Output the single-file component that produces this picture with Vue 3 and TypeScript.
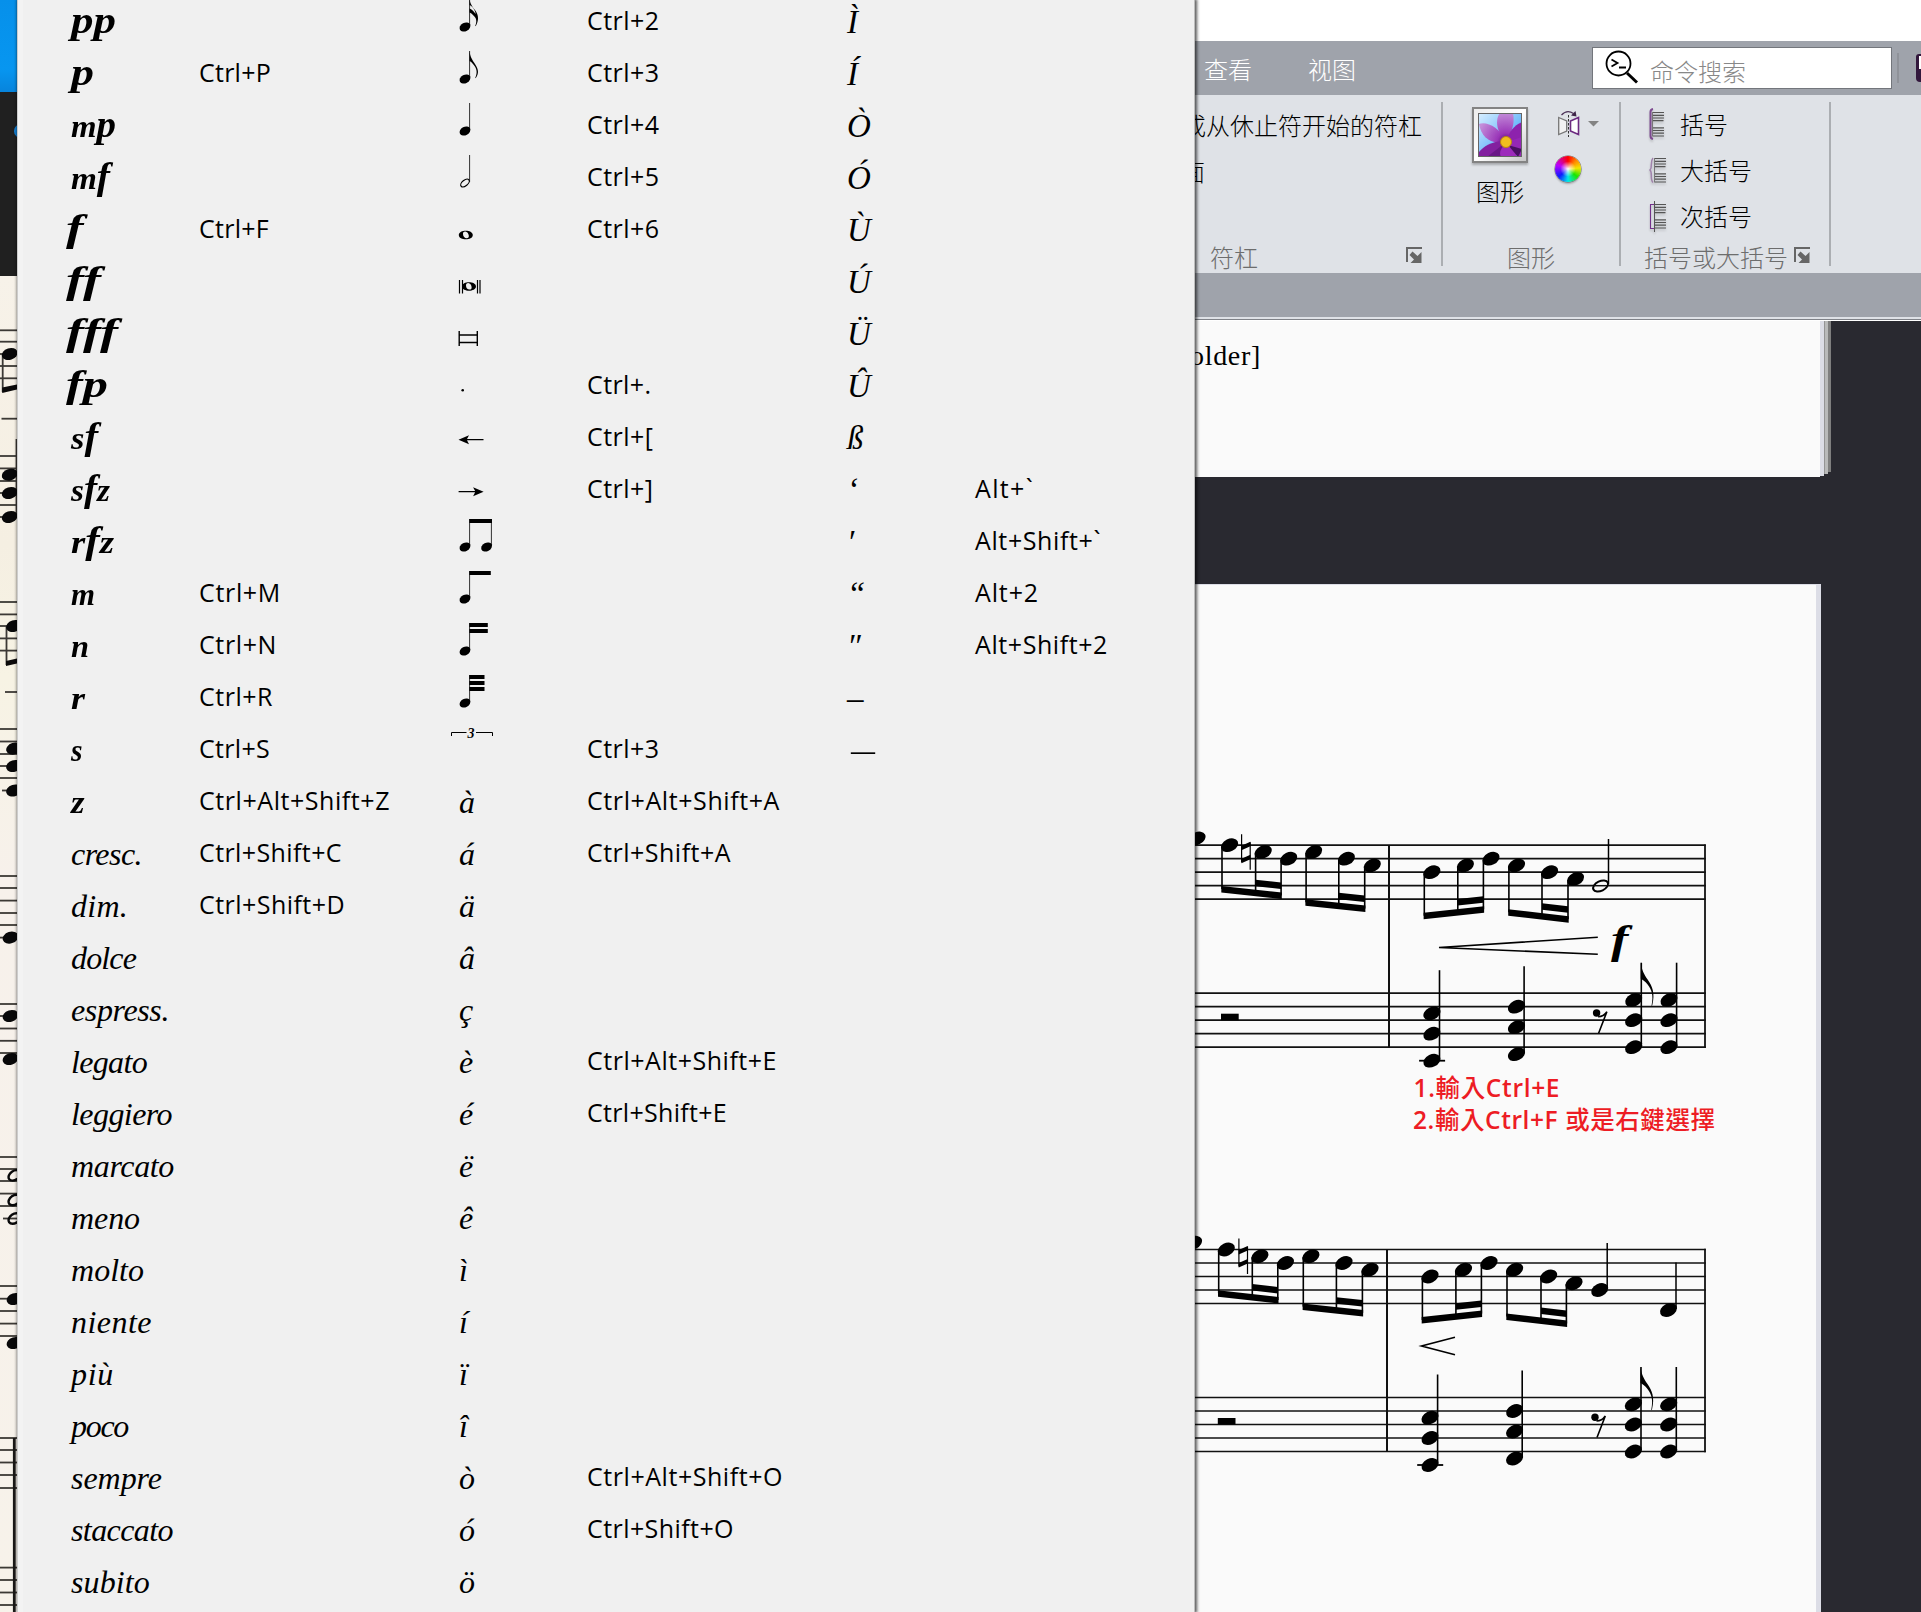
<script setup lang="ts">
interface Item {
  word?: string
  dyn?: string
  icon?: string
  w?: number
  keys?: string
  kw?: number
  indent?: number
}

// Spreads a label over the given width by adjusting its tracking
const vFit = {
  mounted(el: HTMLElement, binding: { value?: number }) {
    if (!binding.value) return
    const n = (el.textContent ?? '').length
    const now = el.getBoundingClientRect().width
    if (n) el.style.letterSpacing = `${((binding.value - now) / n).toFixed(3)}px`
  },
}

// Widens the letter shapes themselves, as dynamics are drawn broad
const vWiden = {
  mounted(el: HTMLElement, binding: { value?: number }) {
    if (!binding.value) return
    const now = el.getBoundingClientRect().width
    el.style.transform = `scaleX(${(binding.value / now).toFixed(4)})`
  },
}

const expression: Item[] = [
  { dyn: 'pp', w: 45 },
  { dyn: 'p', w: 23, keys: 'Ctrl+P', kw: 72 },
  { dyn: 'mp', w: 45 },
  { dyn: 'mf', w: 39 },
  { dyn: 'f', w: 17.5, keys: 'Ctrl+F', kw: 70 },
  { dyn: 'ff', w: 35 },
  { dyn: 'fff', w: 52 },
  { dyn: 'fp', w: 42 },
  { dyn: 'sf', w: 27 },
  { dyn: 'sfz', w: 39 },
  { dyn: 'rfz', w: 43 },
  { dyn: 'm', w: 24, keys: 'Ctrl+M', kw: 82 },
  { dyn: 'n', w: 18, keys: 'Ctrl+N', kw: 78 },
  { dyn: 'r', w: 14, keys: 'Ctrl+R', kw: 74 },
  { dyn: 's', w: 11.5, keys: 'Ctrl+S', kw: 71 },
  { dyn: 'z', w: 13.5, keys: 'Ctrl+Alt+Shift+Z', kw: 191 },
  { word: 'cresc.', w: 71, keys: 'Ctrl+Shift+C', kw: 143 },
  { word: 'dim.', w: 57, keys: 'Ctrl+Shift+D', kw: 146 },
  { word: 'dolce', w: 65 },
  { word: 'espress.', w: 98 },
  { word: 'legato', w: 76 },
  { word: 'leggiero', w: 101 },
  { word: 'marcato', w: 103 },
  { word: 'meno', w: 69 },
  { word: 'molto', w: 73 },
  { word: 'niente', w: 81 },
  { word: 'più', w: 43 },
  { word: 'poco', w: 57 },
  { word: 'sempre', w: 91 },
  { word: 'staccato', w: 102 },
  { word: 'subito', w: 79 },
]

const notes: Item[] = [
  { icon: 'n16', keys: 'Ctrl+2', kw: 72.5 },
  { icon: 'n8', keys: 'Ctrl+3', kw: 72.5 },
  { icon: 'n4', keys: 'Ctrl+4', kw: 72.5 },
  { icon: 'n2', keys: 'Ctrl+5', kw: 72.5 },
  { icon: 'n1', keys: 'Ctrl+6', kw: 72.5 },
  { icon: 'breve' },
  { icon: 'longa' },
  { icon: 'dot', keys: 'Ctrl+.', kw: 64.5 },
  { icon: 'left', keys: 'Ctrl+[', kw: 66.5 },
  { icon: 'right', keys: 'Ctrl+]', kw: 66.5 },
  { icon: 'beam2' },
  { icon: 'b1' },
  { icon: 'b2' },
  { icon: 'b3' },
  { icon: 'tuplet', keys: 'Ctrl+3', kw: 72.5 },
  { word: 'à', keys: 'Ctrl+Alt+Shift+A', kw: 193 },
  { word: 'á', keys: 'Ctrl+Shift+A', kw: 144 },
  { word: 'ä' },
  { word: 'â' },
  { word: 'ç' },
  { word: 'è', keys: 'Ctrl+Alt+Shift+E', kw: 190 },
  { word: 'é', keys: 'Ctrl+Shift+E', kw: 140 },
  { word: 'ë' },
  { word: 'ê' },
  { word: 'ì' },
  { word: 'í' },
  { word: 'ï' },
  { word: 'î' },
  { word: 'ò', keys: 'Ctrl+Alt+Shift+O', kw: 196 },
  { word: 'ó', keys: 'Ctrl+Shift+O', kw: 147 },
  { word: 'ö' },
]

const letters: Item[] = [
  { word: 'Ì' },
  { word: 'Í' },
  { word: 'Ò' },
  { word: 'Ó' },
  { word: 'Ù' },
  { word: 'Ú' },
  { word: 'Ü' },
  { word: 'Û' },
  { word: 'ß' },
  { word: '‘', keys: 'Alt+`', kw: 59 },
  { word: '′', keys: 'Alt+Shift+`', kw: 126 },
  { word: '“', keys: 'Alt+2', kw: 64 },
  { word: '″', keys: 'Alt+Shift+2', kw: 133 },
  { word: '–' },
  { word: '—', indent: 4 },
]

const columns = [expression, notes, letters]
const isLarge = (c: string) => c === 'f' || c === 'p'

// Score
const LINES = [0, 1, 2, 3, 4]
const SP = 13.5

interface Beam { xs: number[]; l: number; r: number }
interface Chord { x: number; ys: number[]; top: number; flag?: boolean; ledger?: boolean }
interface System {
  treble: number
  bass: number
  bar: number
  heads: [number, number][]
  beams: Beam[]
  naturalX: number
  hairpin: [number, number, number, number, number]
  restX: number
  rest8X: number
  chords: Chord[]
}

const steps = [-1, 0, 1, 2, 1, 2, 3, 4, 3, 2, 3, 4, 5]
const xs1 = [1197, 1229.6, 1263.2, 1288.7, 1313.7, 1346.4, 1372.3, 1431.9, 1465.4, 1491, 1516.5, 1549.6, 1575.6]
const xs2 = [1193.5, 1226.3, 1259.9, 1285.4, 1310.9, 1344, 1370, 1430, 1463.5, 1489, 1514.6, 1548.6, 1574]

function makeSystem(
  xs: number[], dy: number, bar: number, cx: number[],
  hairpin: System['hairpin'], naturalX: number, restX: number, rest8X: number,
): System {
  const t = 845.2 + dy
  const b = 993.2 + dy
  const heads = xs.map((x, i) => [x, t + steps[i] * 6.75] as [number, number])
  const tops: [number, number][] = [[886, 892.6], [899.3, 905.6], [912.7, 906.3], [909.3, 916.2]]
  const beams = tops.map(([l, r], g) => ({
    xs: [0, 1, 2].map((k) => xs[1 + g * 3 + k] - 7.6),
    l: l + dy,
    r: r + dy,
  }))
  const chords: Chord[] = [
    { x: cx[0], ys: [20.2, 40.5, 67.5].map((v) => b + v), top: b - 23, ledger: true },
    { x: cx[1], ys: [13.5, 34, 61].map((v) => b + v), top: b - 27 },
    { x: cx[2], ys: [6.8, 27, 54].map((v) => b + v), top: b - 30.5, flag: true },
    { x: cx[3], ys: [6.8, 27, 54].map((v) => b + v), top: b - 30.5 },
  ]
  return { treble: t, bass: b, bar, heads, beams, naturalX, hairpin, restX, rest8X, chords }
}

const systems: System[] = [
  makeSystem(xs1, 0, 1389, [1431.9, 1516.5, 1633.7, 1669], [1439, 947.5, 1597.8, 937.3, 954.3], 1241.4, 1221, 1592.6),
  makeSystem(xs2, 404.3, 1387, [1430, 1514.6, 1633.4, 1668.7], [1421.5, 1346, 1455, 1337.3, 1354.7], 1238.7, 1217.8, 1591),
]

const headTf = (x: number, y: number) => `translate(${x} ${y}) rotate(-26)`

function beamPoints(b: Beam) {
  const [a, , c] = b.xs
  return `${a - 0.7},${b.l} ${c + 0.7},${b.r} ${c + 0.7},${b.r + 6.5} ${a - 0.7},${b.l + 6.5}`
}
function beamAt(b: Beam, x: number) {
  const [a, , c] = b.xs
  return b.l + ((b.r - b.l) * (x - a)) / (c - a)
}
function subPoints(b: Beam) {
  const [, m, c] = b.xs
  const y1 = beamAt(b, m) - 10
  const y2 = b.r - 10
  return `${m},${y1} ${c},${y2} ${c},${y2 + 6.5} ${m},${y1 + 6.5}`
}

// Scanned sheet at the far left
const sheetLines = [
  330.3, 341.7, 354, 366, 378.3, 456, 468.4, 481, 505, 602, 614.4, 626, 638.4, 650.6,
  729, 741.5, 754, 778, 876, 888, 900.6, 913, 925, 1004, 1016, 1028.5, 1040.8, 1053,
  1157, 1169, 1181, 1193.6, 1206, 1286, 1298.7, 1311, 1323.6, 1336,
  1438, 1450, 1462.5, 1475, 1488, 1567.6, 1580, 1592.5, 1605,
]
const sheetHeads = [
  [9.7, 354], [9.7, 474.7], [9.7, 493], [9.7, 517], [14, 626], [14, 748.6], [14, 766], [14, 790.5],
  [10.5, 937.6], [10.5, 1016], [10.5, 1059], [14.5, 1299], [14.5, 1343],
]
const sheetOpen = [[14.5, 1175.4], [14.5, 1200], [14.5, 1218.5]]
const brackets = ['括号', '大括号', '次括号']
const flagPath = 'c1.2 8 3 11 7 17 c4.5 6.500 7.500 13 4.500 25.500 c-.4 1 -1 .8 -.7 0 c2 -10 .2 -15 -3.800 -20.500 c-2.500 -3.200 -4.800 -5 -7 -6z'
</script>

<template>
  <div class="screen">
    <aside class="behind">
      <div class="sky"></div>
      <div class="panel"><i class="bubble"></i></div>
      <svg class="sheet" viewBox="0 276 17 1336" width="17" height="1336">
        <g stroke="#3c3935" stroke-width="1.800">
          <line v-for="y in sheetLines" :key="y" x1="0" x2="17" :y1="y" :y2="y" />
          <line x1="0" x2="6" y1="493" y2="493" />
          <line x1="0" x2="6" y1="517" y2="517" />
          <line x1="0" x2="8" y1="766" y2="766" />
          <line x1="2" x2="8" y1="790.5" y2="790.5" />
          <line x1="0" x2="6" y1="937.6" y2="937.6" />
          <line x1="3" x2="17" y1="1218.5" y2="1218.5" />
          <line x1="1.5" x2="17" y1="418.7" y2="418.7" />
          <line x1="5" x2="17" y1="692" y2="692" />
          <line x1="2.700" x2="2.700" y1="354" y2="392" />
          <line x1="6.500" x2="6.500" y1="626" y2="665" />
          <line x1="16.500" x2="16.500" y1="439" y2="517" />
        </g>
        <path d="M2.200 387.500 17 384.500V389.500L2.200 393zM6 661 17 658.500V663.500L6 666z" fill="#0b0a0a" />
        <line x1="14.300" x2="14.300" y1="1438" y2="1612" stroke="#1a1817" stroke-width="2.800" />
        <ellipse v-for="(h, i) in sheetHeads" :key="i" rx="8" ry="5.800" :transform="`translate(${h[0]} ${h[1]}) rotate(-18)`" fill="#080809" />
        <ellipse v-for="(h, i) in sheetOpen" :key="'o' + i" rx="6.500" ry="4.500" :transform="`translate(${h[0]} ${h[1]}) rotate(-35)`" fill="none" stroke="#080809" stroke-width="2.400" />
      </svg>
    </aside>

    <div class="menu">
      <ul v-for="(col, c) in columns" :key="c" class="col">
        <li v-for="(it, r) in col" :key="r" class="row">
          <span class="glyph">
            <span v-if="it.dyn" v-widen="it.w" class="dyn" :class="{ hang: it.dyn[0] === 'f' }"><span v-for="(ch, k) in it.dyn" :key="k" :class="isLarge(ch) ? 'lg' : 'sm'">{{ ch }}</span></span>
            <span v-else-if="it.word" v-fit="it.w" class="word" :class="{ wide: it.indent, cap: c === 2 }">{{ it.word }}</span>
            <svg v-else class="note" viewBox="0 0 50 44" width="50" height="44">
              <template v-if="['n16', 'n8', 'n4', 'beam2', 'b1', 'b2', 'b3'].includes(it.icon!)">
                <ellipse rx="5.700" ry="4.200" transform="translate(15 27) rotate(-28)" />
                <line x1="19.600" x2="19.600" y1="-1" y2="26" stroke="#000" stroke-width=".8" />
              </template>
              <path v-if="it.icon === 'n8'" d="M19.500 -1c.6 6 3 9 5.500 13c3.500 5.500 4.200 9 .8 14c-.8 .4 -.8 0 -.4 -.6c2.400 -5.500 1 -9 -1.600 -12.400c-1.800 -2.400 -3 -3.600 -4.300 -4z" />
              <path v-if="it.icon === 'n16'" d="M19.500 -1c.6 5 3 8 5.500 11c3.500 4.500 4.200 10 .8 16c-.8 .4 -.8 0 -.4 -.6c1.500 -4 1 -7 -1 -9c-2 -2.400 -3.500 -3.600 -4.900 -4v-4c2 .6 4.500 3 6.200 5.500c-.8 -4.500 -3.600 -8 -6.200 -9z" />
              <g v-if="it.icon === 'n2'" fill="none" stroke="#000">
                <ellipse rx="5" ry="2.800" transform="translate(15 27) rotate(-38)" stroke-width="1.200" />
                <line x1="19.600" x2="19.600" y1="-1" y2="26" stroke-width=".8" />
              </g>
              <path v-if="it.icon === 'n1'" fill-rule="evenodd" d="M8.800 27c0 -5.800 14 -5.800 14 0s-14 5.800 -14 0zM13 26c0 2.500 1.800 4.300 3.600 4.300s2.400 -1 2.200 -2.700s-1.600 -4 -3.500 -4s-2.300 1.100 -2.300 2.400z" />
              <g v-if="it.icon === 'breve'">
                <path fill-rule="evenodd" d="M12 26.500c0 -5.600 14 -5.600 14 0s-14 5.600 -14 0zM16 25.500c0 2.500 1.600 4.100 3.400 4.100s2.400 -1 2.200 -2.600s-1.500 -3.900 -3.300 -3.900s-2.300 1.100 -2.300 2.400z" />
                <path d="M9.500 20v13.500M12.500 20v13.500M27.500 20v13.500M30 20v13.500" stroke="#000" stroke-width="1.200" />
              </g>
              <path v-if="it.icon === 'longa'" d="M9.200 19v15M27.300 19v15M9 23h18.500M9 30.500h18.500" stroke="#000" stroke-width="1.400" />
              <circle v-if="it.icon === 'dot'" cx="12.700" cy="26.300" r="1.300" />
              <path v-if="it.icon === 'left'" d="M8.500 23.700l10.500 -4.500l-2 3.900h16.500v1.200h-16.500l2 3.900z" />
              <path v-if="it.icon === 'right'" d="M33.600 23.700l-10.500 -4.500l2 3.900h-16.500v1.200h16.500l-2 3.900z" />
              <g v-if="it.icon === 'beam2'">
                <rect x="19.300" y="-1" width="22.700" height="4" />
                <ellipse rx="5.700" ry="4.200" transform="translate(36.600 27) rotate(-28)" />
                <line x1="41.400" x2="41.400" y1="-1" y2="26" stroke="#000" stroke-width=".8" />
              </g>
              <rect v-if="it.icon === 'b1'" x="19.300" y="-1" width="21.500" height="4" />
              <path v-if="it.icon === 'b2'" d="M19.300 -1h18.500v4h-18.500zM19.300 5h18.500v4h-18.500z" />
              <path v-if="it.icon === 'b3'" d="M19.300 -1h15.200v4h-15.200zM19.300 5h15.200v4h-15.200zM19.300 11h15.200v4h-15.200z" />
              <g v-if="it.icon === 'tuplet'">
                <path d="M1.500 8v-3.500h15M26 4.500h16.500v3.500" fill="none" stroke="#000" stroke-width="1" />
                <text x="21" y="10" text-anchor="middle" class="three">3</text>
              </g>
            </svg>
          </span>
          <span v-if="it.keys" v-fit="it.kw" class="keys">{{ it.keys }}</span>
        </li>
      </ul>
    </div>

    <main class="app">
      <div class="titlebar"></div>
      <nav class="tabs">
        <span>查看</span>
        <span>视图</span>
        <div class="search">
          <svg width="36" height="36" viewBox="1604 48 36 36" fill="none" stroke="#000">
            <circle cx="1618.500" cy="63.500" r="12" stroke-width="1.800" />
            <path d="M1627 73l10 9.500" stroke-width="3" />
            <path d="M1611.500 59.500l6 3.500l-6 3.500M1619 67.500h7" stroke-width="1.800" />
          </svg>
          <em>命令搜索</em>
        </div>
        <i class="tick"></i>
        <i class="badge"><b></b></i>
      </nav>

      <section class="ribbon">
        <div class="group g1">
          <p class="long">或从休止符开始的符杠</p>
          <p class="face">面</p>
          <footer><span>符杠</span>
            <svg class="launch" width="16" height="16" viewBox="0 0 16 16"><path d="M1 15V1h15" fill="none" stroke="#666" stroke-width="2" /><path d="M6.500 4.500l5 4.500l4 -4v11h-11l3.500 -3.500l-4.500 -4.500z" fill="#666" /></svg>
          </footer>
        </div>
        <div class="group g2">
          <div class="tools">
            <div class="pic">
              <svg width="56" height="56" viewBox="0 0 56 56">
                <defs>
                  <linearGradient id="frm" x1="0" y1="0" x2="1" y2="1"><stop offset="0" stop-color="#ececec" /><stop offset=".5" stop-color="#fff" /><stop offset="1" stop-color="#c4c4c4" /></linearGradient>
                  <linearGradient id="sk" x1="0" y1="0" x2="1" y2="1"><stop offset="0" stop-color="#d5edff" /><stop offset=".6" stop-color="#6db9fa" /><stop offset="1" stop-color="#7fc4fb" /></linearGradient>
                  <radialGradient id="pt" gradientUnits="userSpaceOnUse" cx="34" cy="35" r="30"><stop offset="0" stop-color="#4d1068" /><stop offset=".3" stop-color="#9a35b8" /><stop offset="1" stop-color="#c48fda" /></radialGradient>
                  <clipPath id="ph"><rect x="7" y="7" width="42" height="42" /></clipPath>
                </defs>
                <rect x="1" y="1" width="54" height="54" fill="url(#frm)" stroke="#838383" stroke-width="2" />
                <g clip-path="url(#ph)" fill="url(#pt)">
                  <rect x="7" y="7" width="42" height="42" fill="url(#sk)" />
                  <path d="M34 33C24 26 23 12 28 6H41C43 16 40 26 34 33z" />
                  <path d="M33 34C20 39 9 30 7 17C14 14 28 20 33 34z" />
                  <path d="M35 33C37 24 43 18 50 15V35z" fill="#8d22ad" />
                  <path d="M35 35L50 30V50L46 50z" fill="#9527b6" />
                  <path d="M33 35C26 32 12 38 7 45V50H22z" fill="#83209f" />
                  <path d="M33 36L15 50H30z" fill="#6a1686" />
                  <path d="M34 36C28 42 27 46 29 50H45C44 44 40 40 34 36z" fill="#9d2bbb" />
                  <path d="M36 38L50 42L46 50z" fill="#4a0f63" />
                </g>
                <rect x="6.500" y="6.500" width="43" height="43" fill="none" stroke="#666" />
                <circle cx="34" cy="35" r="5.500" fill="#f1bd20" stroke="#bb8413" />
              </svg>
              <span>图形</span>
            </div>
            <div class="mini">
              <div class="flip">
                <svg width="24" height="28" viewBox="1557 110 24 28" fill="none">
                  <path d="M1561.500 115q5.500 -6 12 -1.500" stroke="#4d3358" stroke-width="1.200" /><path d="M1571 115.500l5.500 1l-1 -5.500z" fill="#3d2448" />
                  <path d="M1558.700 117.500l8 3.500v10l-8 3.500z" fill="#f2f2f2" stroke="#777" stroke-width="1.300" />
                  <path d="M1578.500 117.500l-8 3.500v10l8 3.500z" fill="#fff" stroke="#6c2a80" stroke-width="1.600" />
                  <path d="M1568.500 115v22" stroke="#333" stroke-dasharray="2.500 1.500" />
                </svg>
                <svg width="11" height="6" viewBox="0 0 11 6"><path d="M0 0h11L5.500 5.500z" fill="#838383" /></svg>
              </div>
              <div class="wheel"></div>
            </div>
          </div>
          <footer><span>图形</span></footer>
        </div>
        <div class="group g3">
          <div v-for="(label, i) in brackets" :key="label" class="brk">
            <svg width="20" height="32" viewBox="0 0 20 32" fill="none">
              <g :transform="i ? 'translate(2 0)' : ''">
                <path d="M5 4.500h11M5 7.300h11M5 10h11M5 12.700h10.500M5 19.800h11M5 22.500h11M5 25.200h11M5 28h11" stroke="#555" stroke-width="1.200" />
                <path d="M4.500 4v24.500" stroke="#777" stroke-width="1" />
              </g>
              <path v-if="i === 0" d="M5 1Q2.500 1.500 2.500 4v24Q2.500 30.500 5 31" stroke="#7d4a90" stroke-width="2" />
              <path v-if="i === 1" d="M5 4C1.500 8 5 13 2 16C5 19 1.500 25 5 28.500" stroke="#a083ac" stroke-width="1.500" />
              <path v-if="i === 2" d="M6.500 4.500H2.500v24h4" stroke="#73308a" stroke-width="1.100" />
              <path v-if="i === 2" d="M6.500 1v31" stroke="#555" />
            </svg>
            <span>{{ label }}</span>
          </div>
          <footer><span>括号或大括号</span>
            <svg class="launch" width="16" height="16" viewBox="0 0 16 16"><path d="M1 15V1h15" fill="none" stroke="#666" stroke-width="2" /><path d="M6.500 4.500l5 4.500l4 -4v11h-11l3.500 -3.500l-4.500 -4.500z" fill="#666" /></svg>
          </footer>
        </div>
      </section>
      <div class="band"></div>

      <section class="desk">
        <div class="page1">
          <div class="paper"><span v-fit="71">older]</span></div>
          <i class="e1"></i><i class="e2"></i><i class="e3"></i>
        </div>
        <div class="page2">
          <svg width="621" height="1028" viewBox="1195 584 621 1028">
            <g v-for="(s, i) in systems" :key="i">
              <g stroke="#111" stroke-width="1.700">
                <line v-for="n in LINES" :key="n" x1="1195" x2="1705.800" :y1="s.treble + n * SP" :y2="s.treble + n * SP" />
                <line v-for="n in LINES" :key="'b' + n" x1="1195" x2="1705.800" :y1="s.bass + n * SP" :y2="s.bass + n * SP" />
                <line :x1="s.bar" :x2="s.bar" :y1="s.treble" :y2="s.bass + 54" stroke-width="2" />
                <line x1="1705" x2="1705" :y1="s.treble - .7" :y2="s.bass + 54.700" stroke-width="1.800" />
              </g>
              <ellipse v-for="(h, k) in s.heads" :key="'h' + k" rx="9" ry="6.300" :transform="headTf(h[0], h[1])" />
              <g v-for="(b, g) in s.beams" :key="'g' + g">
                <polygon :points="beamPoints(b)" />
                <polygon :points="subPoints(b)" />
                <line v-for="(x, k) in b.xs" :key="k" :x1="x" :x2="x" :y1="s.heads[1 + g * 3 + k][1] + 1" :y2="beamAt(b, x) + 3" stroke="#000" stroke-width="1.600" />
              </g>
              <g :transform="`translate(${s.naturalX} ${s.treble})`">
                <path d="M.2 -11v28M8.800 -3v27.500" stroke="#000" stroke-width="1.200" />
                <path d="M0 0.500l9 -4v4.500l-9 4zM0 13.500l9 -4v4.500l-9 4z" />
              </g>
              <path :d="`M${s.hairpin[2]} ${s.hairpin[3]}L${s.hairpin[0]} ${s.hairpin[1]}L${s.hairpin[2]} ${s.hairpin[4]}`" fill="none" stroke="#000" stroke-width="1.600" />
              <rect :x="s.restX" :y="s.bass + 20.500" width="17.700" height="6.500" />
              <g v-for="(c, k) in s.chords" :key="'c' + k">
                <ellipse v-for="y in c.ys" :key="y" rx="9" ry="6.300" :transform="headTf(c.x, y)" />
                <line :x1="c.x + 7.600" :x2="c.x + 7.600" :y1="c.top" :y2="c.ys[2] - 1" stroke="#000" stroke-width="1.600" />
                <line v-if="c.ledger" :x1="c.x - 12.800" :x2="c.x + 13.200" :y1="c.ys[2]" :y2="c.ys[2]" stroke="#000" stroke-width="1.800" />
                <path v-if="c.flag" :d="`M${c.x + 7.1} ${c.top}${flagPath}`" />
              </g>
              <g :transform="`translate(${s.rest8X} ${s.bass + 16})`">
                <circle cx="4" cy="3.800" r="3.700" />
                <path d="M5.500 7.500Q11 7.500 14.300 2.500L6 24" fill="none" stroke="#000" stroke-width="1.600" />
              </g>
            </g>
            <ellipse rx="8" ry="4.800" :transform="headTf(1600.6, 886)" fill="#fafafa" stroke="#000" stroke-width="2" />
            <line x1="1594" x2="1607" y1="885.700" y2="885.700" stroke="#111" stroke-width="1.500" />
            <line x1="1608.500" x2="1608.500" y1="839" y2="884" stroke="#000" stroke-width="1.500" />
            <ellipse rx="9" ry="6.300" :transform="headTf(1599.7, 1290)" />
            <line x1="1607.200" x2="1607.200" y1="1243" y2="1289" stroke="#000" stroke-width="1.500" />
            <ellipse rx="9" ry="6.300" :transform="headTf(1668.5, 1310)" />
            <line x1="1676" x2="1676" y1="1262.500" y2="1309" stroke="#000" stroke-width="1.500" />
            <text transform="translate(1611 953) scale(1.3 1)" class="forte">f</text>
            <text x="1413.500" y="1097" textLength="146" class="red">1.<tspan>輸入</tspan>Ctrl+E</text>
            <text x="1413" y="1129" textLength="302" class="red">2.<tspan>輸入</tspan>Ctrl+F <tspan>或是右鍵選擇</tspan></text>
          </svg>
        </div>
      </section>
    </main>
  </div>
</template>

<style>
body { margin: 0; overflow: hidden; }
</style>

<style scoped>
.screen { display: flex; width: 1921px; height: 1612px; overflow: hidden; background: #292930; }
.behind { flex: 0 0 17px; overflow: hidden; display: flex; flex-direction: column; }
.sky { height: 92px; background: linear-gradient(#0690ea 0, #0796f0 75%, #0784dc); flex: none; }
.panel { height: 184px; background: #202020; flex: none; position: relative; }
.bubble { position: absolute; left: 14px; top: 32px; width: 14px; height: 14px; border-radius: 50%; background: #1381d6; }
.sheet { display: block; background: linear-gradient(#f7f2e9, #f5efe2 20%, #f7f3e4 30%, #f7f1eb 45%, #f7f2ea); }

.menu { flex: 0 0 1178px; min-width: 0; box-sizing: border-box; display: flex; padding-left: 52px; border-left: 1px solid #ccc; border-right: 1px solid #bdbdbd; background: linear-gradient(90deg, #f3f3f3 5px, #f0f0f0 5px); box-shadow: 1px 0 3px 1px rgba(0, 0, 0, .65); position: relative; z-index: 2; }
.col { list-style: none; margin: 0; padding: 0; flex: 0 0 388px; }
.col:last-child { flex: 1 1 0; min-width: 0; }
.row { display: flex; height: 52px; align-items: flex-start; }
.glyph { flex: 0 0 129px; height: 52px; color: #000; white-space: nowrap; }
.word { display: inline-block; margin-left: 1px; font: italic 32px/44px "Liberation Serif", serif; }
.word.cap { font-size: 33px; }
.word.wide { margin-left: 5px; transform: scaleX(.82); transform-origin: 0 50%; }
.dyn { display: inline-block; margin-left: 1px; font: italic bold 36px/42px "Liberation Serif", serif; height: 44px; transform-origin: 0 50%; }
.dyn.hang { margin-left: -4px; }
.sm { font-size: 32px; line-height: 1px; }
.lg { font-size: 38px; line-height: 1px; }
.note { display: block; margin-left: -8px; overflow: visible; }
.three { font: italic bold 14px "Liberation Serif", serif; }
.keys { display: inline-block; font: 400 25px/41px "Open Sans", sans-serif; color: #000; white-space: nowrap; }

.app { flex: 1; min-width: 0; display: flex; flex-direction: column; font-family: "Noto Sans CJK SC", sans-serif; font-weight: 300; font-size: 24px; }
.titlebar { height: 41px; background: #fff; flex: none; }
.tabs { height: 54px; flex: none; background: #9fa3ab; display: flex; align-items: center; color: #fff; box-sizing: border-box; padding-left: 9px; }
.tabs > span { width: 48px; flex: none; margin-right: 56px; line-height: 54px; white-space: nowrap; margin-top: 2px; }
.search { box-sizing: border-box; width: 300px; height: 42px; margin-left: 180px; background: #fff; border: 1px solid #73767c; display: flex; align-items: center; flex: none; color: #888; }
.search svg { margin: -4px 10px 0 11px; }
.search em { padding-top: 4px; font-style: normal; }
.tick { width: 2px; height: 30px; margin-left: 5px; background: #8f9299; flex: none; }
.badge { width: 5px; height: 28px; margin-left: 17px; background: #32173c; border-radius: 3px 0 0 4px; flex: none; }
.badge b { display: block; width: 2px; height: 13px; margin: 2px 0 0 3px; background: #fff; }

.ribbon { height: 178px; flex: none; background: #dfe2e7; display: flex; padding-top: 7px; box-sizing: border-box; color: #000; }
.group { height: 164px; box-sizing: border-box; border-right: 2px solid #abaeb2; display: flex; flex-direction: column; flex: none; }
.group p { margin: 0; white-space: nowrap; line-height: 46px; height: 46px; }
.g1 { width: 248px; }
.g1 .long { margin-left: -13px; }
.g1 .face { margin-left: -14px; }
.g2 { width: 178px; }
.g3 { width: 210px; padding-left: 27px; }
.group footer { margin-top: auto; height: 34px; line-height: 34px; margin-bottom: -8px; color: #6d6d6d; display: flex; align-items: center; }
.g1 footer { padding-left: 15px; justify-content: space-between; padding-right: 19px; }
.g2 footer { justify-content: center; }
.g3 footer { margin-left: -4px; }
.launch { flex: none; margin-top: -5px; }
.g3 .launch { margin-left: 6px; }
.tools { display: flex; padding: 5px 0 0 29px; }
.pic { width: 56px; display: flex; flex-direction: column; align-items: center; }
.pic svg { display: block; filter: drop-shadow(0 2px 1px rgba(0, 0, 0, .25)); }
.pic span { line-height: 34px; margin-top: 11px; }
.mini { margin: 3px 0 0 29px; }
.flip { display: flex; align-items: center; height: 28px; gap: 7px; }
.wheel { width: 26px; height: 26px; border-radius: 50%; margin: 18px 0 0 -2px; background: radial-gradient(circle, #fff 0, rgba(255, 255, 255, .6) 15%, rgba(255, 255, 255, 0) 42%), conic-gradient(#f00, #ff8a00 45deg, #f2e600 85deg, #19e600 130deg, #00e8e8 180deg, #0d1cff 230deg, #b900ff 290deg, #f00); box-shadow: 0 0 0 .5px #666, 0 2px 2px rgba(0, 0, 0, .25); }
.brk { display: flex; align-items: center; height: 46px; line-height: 46px; margin-top: -1px; margin-bottom: 1px; }
.brk svg { margin-right: 12px; margin-top: -1px; filter: drop-shadow(0 2px 1px rgba(0, 0, 0, .18)); }

.band { height: 47px; flex: none; box-sizing: border-box; background: #9fa3ab; border-bottom: 1px solid #7f8288; box-shadow: inset 0 -2px #dfe2e7; }
.desk { flex: 1; background: #292930; border-top: 1px solid #fff; }
.page1 { height: 156px; display: flex; align-items: flex-start; }
.paper { width: 625px; height: 156px; background: #fafafa; font: 28px/34px "Liberation Serif", serif; }
.paper span { display: inline-block; margin: 18px 0 0 -5px; }
.page1 i { display: block; }
.e1 { width: 4px; height: 155px; background: #dcdde6; }
.e2 { width: 4px; height: 153px; background: #b9baba; border-left: 1px solid #949494; box-sizing: border-box; }
.e3 { width: 3px; height: 151px; background: #7f7f7f; }
.page2 { margin-top: 107px; width: 621px; height: 1028px; background: #fafafa; border-right: 5px solid #dcdde6; box-shadow: inset 0 1px #dcdde6; }
.page2 svg { display: block; }
.forte { font: italic bold 40px "Liberation Serif", serif; }
.red { font: 600 24.500px "Open Sans", sans-serif; fill: #ed1c24; }
.red tspan { font-family: "Noto Sans CJK TC", sans-serif; font-weight: 500; }
</style>
